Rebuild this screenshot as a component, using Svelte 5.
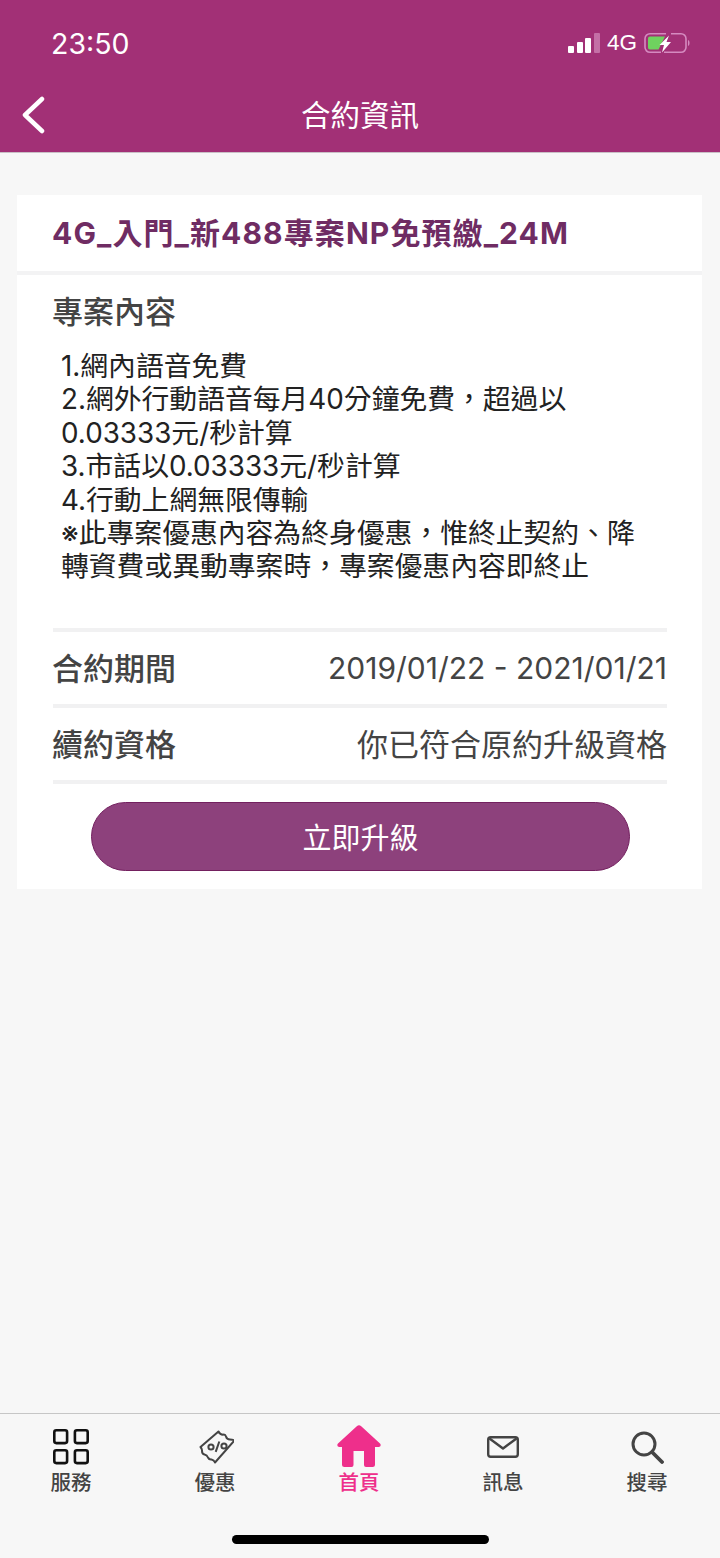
<script>
  const tabs = [
    { label: '服務', icon: 'grid' },
    { label: '優惠', icon: 'coupon' },
    { label: '首頁', icon: 'home', active: true },
    { label: '訊息', icon: 'mail' },
    { label: '搜尋', icon: 'search' }
  ];
</script>

<div class="page">
  <header class="header">
    <div class="status">
      <span class="time">23:50</span>
      <div class="indicators">
        <span class="signal">
          <i class="b1"></i><i class="b2"></i><i class="b3"></i><i class="b4"></i>
        </span>
        <span class="net">4G</span>
        <svg class="battery" width="47" height="22" viewBox="0 0 47 22">
          <path d="M22 1.700H6a5 5 0 0 0-5 5v8.600a5 5 0 0 0 5 5h11" fill="none" stroke="#d58ac0" stroke-width="1.600"/>
          <path d="M27 1.700h10a5 5 0 0 1 5 5v8.600a5 5 0 0 1-5 5H20" fill="none" stroke="#d58ac0" stroke-width="1.600"/>
          <path d="M6 4.500h15L14.500 17.500H6a2 2 0 0 1-2-2v-9a2 2 0 0 1 2-2z" fill="#6fd25f"/>
          <path d="M25 3.500 15.500 13H20l-2 7.500L27 10h-4.500z" fill="#fff"/>
          <path d="M44 8c2 .6 2 5.400 0 6z" fill="#d58ac0"/>
        </svg>
      </div>
    </div>
    <div class="nav">
      <svg class="back" width="26" height="38" viewBox="0 0 26 38">
        <path d="M22 3 5 19l17 16" fill="none" stroke="#fff" stroke-width="4.500" stroke-linecap="round" stroke-linejoin="round"/>
      </svg>
      <h1>合約資訊</h1>
    </div>
  </header>

  <main class="content">
    <section class="card">
      <h2 class="plan">4G_入門_新488專案NP免預繳_24M</h2>
      <div class="body">
        <h3>專案內容</h3>
        <p class="desc">1.網內語音免費<br>2.網外行動語音每月40分鐘免費，超過以<br>0.03333元/秒計算<br>3.市話以0.03333元/秒計算<br>4.行動上網無限傳輸<br>※此專案優惠內容為終身優惠，惟終止契約、降<br>轉資費或異動專案時，專案優惠內容即終止</p>
        <div class="row first">
          <span class="label">合約期間</span>
          <span class="value date">2019/01/22 - 2021/01/21</span>
        </div>
        <div class="row">
          <span class="label">續約資格</span>
          <span class="value">你已符合原約升級資格</span>
        </div>
        <div class="action">
          <button class="upgrade">立即升級</button>
        </div>
      </div>
    </section>
  </main>

  <nav class="tabs">
    {#each tabs as t}
      <div class="tab" class:active={t.active}>
        <span class="icon">
          {#if t.icon === 'grid'}
            <svg width="36" height="36" viewBox="0 0 36 36" fill="none" stroke="#111" stroke-width="2.600">
              <rect x="1.300" y="1.300" width="12.800" height="12.800" rx="2"/>
              <rect x="21.900" y="1.300" width="12.800" height="12.800" rx="2"/>
              <rect x="1.300" y="21.300" width="12.800" height="12.800" rx="2"/>
              <rect x="21.900" y="21.300" width="12.800" height="12.800" rx="2"/>
            </svg>
          {:else if t.icon === 'coupon'}
            <svg width="38" height="38" viewBox="-3 0 38 38" fill="none" stroke="#444" stroke-width="2" stroke-linejoin="round">
              <path d="M19.500 3.500q1.500 3 4.500 3.200q2.300-.5 3 1.800q.8 3 4 3q3 .1 4.500 1L16 34.500q-1-2.500-3.500-3q-2.500.3-3.500-2q-1-2.500-3.500-3q-2.500-.5-2.500-3.500q.3-2-1.500-4z"/>
              <circle cx="12" cy="19" r="2.600"/>
              <circle cx="25" cy="18" r="2.600"/>
              <path d="M20.300 13.500 16.700 23.800"/>
            </svg>
          {:else if t.icon === 'home'}
            <svg width="46" height="44" viewBox="0 0 46 44">
              <path fill-rule="evenodd" d="M20.800 1.200a3.200 3.200 0 0 1 4.400 0L44 18.500c1.400 1.300.5 3.500-1.400 3.500H39V39.500a2.500 2.500 0 0 1-2.500 2.500h-6.500a2 2 0 0 1-2-2V26H17.500V40a2 2 0 0 1-2 2H8.500A2.500 2.500 0 0 1 6 39.500V22H3.400C1.500 22 .6 19.800 2 18.500z" fill="#ee2f8b"/>
            </svg>
          {:else if t.icon === 'mail'}
            <svg width="32" height="22" viewBox="0 0 32 22" fill="none" stroke="#444" stroke-width="2.400" stroke-linejoin="round">
              <rect x="1.200" y="1.200" width="29.600" height="19.600" rx="2.500"/>
              <path d="M2.500 2.500 16 12.500 29.500 2.500"/>
            </svg>
          {:else}
            <svg width="33" height="33" viewBox="0 0 33 33" fill="none" stroke="#444" stroke-width="3">
              <circle cx="13" cy="13" r="11"/>
              <path d="M21 21 31 31" stroke-width="3.800" stroke-linecap="round"/>
            </svg>
          {/if}
        </span>
        <span class="tab-label">{t.label}</span>
      </div>
    {/each}
    <div class="home-bar"></div>
  </nav>
</div>

<style>
  :global(body) {
    margin: 0;
    background: #f7f7f7;
  }
  .page {
    width: 720px;
    height: 1558px;
    display: flex;
    flex-direction: column;
    background: #f7f7f7;
    font-family: "Noto Sans CJK TC", "Noto Sans", sans-serif;
    overflow: hidden;
  }
  .header {
    height: 153px;
    box-sizing: border-box;
    background: #a23076;
    border-bottom: 1px solid #c9c0c6;
    color: #fff;
    flex: none;
  }
  .status {
    display: flex;
    justify-content: space-between;
    align-items: center;
    height: 30px;
    padding: 28px 29px 0 51px;
  }
  .time {
    font-family: Inter, "Liberation Sans", sans-serif;
    font-size: 28.500px;
    font-weight: 400;
  }
  .indicators {
    display: flex;
    align-items: center;
  }
  .signal {
    display: flex;
    align-items: flex-end;
    gap: 2.600px;
    height: 20px;
    margin-right: 7px;
  }
  .signal i {
    display: block;
    width: 6px;
    border-radius: 1px;
    background: #fff;
  }
  .b1 { height: 7px; }
  .b2 { height: 11px; }
  .b3 { height: 15px; }
  .signal .b4 { height: 20px; background: #c46fa6; }
  .net {
    font-family: "Liberation Sans", sans-serif;
    font-size: 22.500px;
    margin-right: 7px;
  }
  .battery {
    display: block;
  }
  .nav {
    position: relative;
    height: 38px;
    margin-top: 38px;
    display: flex;
    align-items: center;
    justify-content: center;
  }
  .back {
    position: absolute;
    left: 20px;
    top: 0;
  }
  h1 {
    margin: 0 0 4px;
    font-size: 29.500px;
    font-weight: 400;
    line-height: 38px;
  }
  .content {
    flex: 1;
    padding: 42px 18px 0 17px;
  }
  .card {
    background: #fff;
    height: 694px;
    display: flex;
    flex-direction: column;
  }
  .plan {
    margin: 0;
    height: 80px;
    box-sizing: border-box;
    padding: 0 35px;
    border-bottom: 4px solid #f3f3f4;
    color: #6f2c63;
    font-family: Inter, "Noto Sans CJK TC", sans-serif;
    font-size: 30px;
    font-weight: 700;
    line-height: 76px;
    letter-spacing: 1.100px;
    white-space: nowrap;
  }
  .body {
    padding: 0 35px 0 36px;
  }
  h3 {
    margin: 13px 0 0 -1px;
    color: #444;
    font-size: 31px;
    font-weight: 500;
    line-height: 44px;
  }
  .desc {
    margin: 18px 0 0 8px;
    color: #222;
    font-family: Inter, "Noto Sans CJK TC", sans-serif;
    font-size: 27.800px;
    line-height: 33.400px;
    white-space: nowrap;
  }
  .row {
    display: flex;
    justify-content: space-between;
    align-items: center;
    height: 72px;
    border-bottom: 4px solid #f1f1f2;
  }
  .row.first {
    margin-top: 44px;
    border-top: 4px solid #f1f1f2;
  }
  .label {
    color: #444;
    font-size: 31px;
    font-weight: 500;
    margin: 0 0 2px -1px;
  }
  .value {
    color: #444;
    font-size: 31px;
    font-weight: 400;
    margin-bottom: 2px;
  }
  .value.date {
    font-family: Inter, "Liberation Sans", sans-serif;
    font-size: 30px;
    font-weight: 400;
    margin-bottom: 0;
  }
  .action {
    padding: 18px 37px 0 38px;
  }
  .upgrade {
    display: block;
    width: 100%;
    height: 69px;
    padding: 0;
    border: 1px solid #73205f;
    border-radius: 35px;
    background: #8d417c;
    color: #fff;
    font-family: inherit;
    font-size: 29px;
  }
  .tabs {
    position: relative;
    flex: none;
    height: 145px;
    box-sizing: border-box;
    border-top: 1px solid #c6c6c6;
    background: #f7f7f7;
    display: grid;
    grid-template-columns: repeat(5, 144px);
  }
  .tab {
    display: flex;
    flex-direction: column;
    align-items: center;
    margin-right: 2px;
    color: #444;
    font-weight: 500;
  }
  .tab.active {
    color: #ee2f8b;
  }
  .icon {
    height: 44px;
    margin-top: 11px;
    display: flex;
    align-items: center;
    justify-content: center;
  }
  .tab-label {
    font-size: 20.500px;
    line-height: 26px;
    margin-top: -1px;
  }
  .home-bar {
    position: absolute;
    left: 232px;
    top: 121px;
    width: 257px;
    height: 9px;
    border-radius: 5px;
    background: #000;
  }
</style>
